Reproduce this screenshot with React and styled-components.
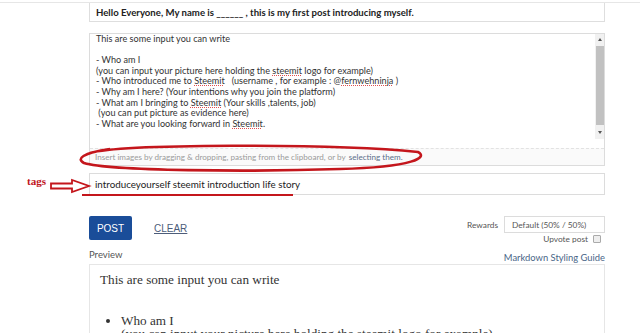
import { createGlobalStyle, styled } from "styled-components";

const Global = createGlobalStyle`
  html, body { margin: 0; padding: 0; background: #fff; }
  body { font-family: Lato, "Open Sans", sans-serif; color: #333; }
`;

const Page = styled.div`
  position: relative;
  width: 640px;
  height: 333px;
  overflow: hidden;
  border-top: 1px solid #e6e6e6;
  margin-top: 2px;
  box-sizing: border-box;
`;

const Column = styled.div`
  width: 516px;
  margin-left: 89px;
  display: flex;
  flex-direction: column;
`;

const TitleBox = styled.div`
  height: 19px;
  border: 1px solid #dedede;
  border-top: none;
  box-sizing: border-box;
  padding: 0 6px;
  display: flex;
  align-items: center;
  font-size: 9.6px;
  font-weight: 700;
  color: #222;
`;

const Editor = styled.div`
  margin-top: 11px;
  height: 133px;
  border: 1px solid #dcdcdc;
  box-sizing: border-box;
  display: flex;
  flex-direction: column;
`;

const EditArea = styled.div`
  flex: 1;
  display: flex;
`;

const EditText = styled.div`
  flex: 1;
  padding: 0 6px;
  font-size: 9.1px;
  line-height: 10.6px;
  color: #333;
  white-space: pre;
`;

const Spell = styled.span`
  text-decoration: underline dotted #e05050;
  text-decoration-thickness: 1px;
  text-underline-offset: 1px;
`;

const Scroll = styled.div`
  width: 9px;
  display: flex;
  flex-direction: column;
  align-items: center;
  background: #f1f1f1;
`;

const Arrow = styled.div`
  height: 10px;
  width: 9px;
  display: flex;
  align-items: center;
  justify-content: center;
  &::after {
    content: "";
    border-left: 2.5px solid transparent;
    border-right: 2.5px solid transparent;
    ${(p) => (p.$up ? "border-bottom: 3px solid #555;" : "border-top: 3px solid #555;")}
  }
`;

const Thumb = styled.div`
  width: 8px;
  height: 79px;
  margin: 2px 0;
  background: #c1c1c1;
`;

const Grip = styled.div`
  margin-top: auto;
  width: 9px;
  height: 9px;
  background: #fff;
`;

const Footer = styled.div`
  height: 16px;
  border-top: 1px dashed #e2e2e2;
  background: #fafafa;
  padding: 0 5px;
  display: flex;
  align-items: center;
  font-size: 8.1px;
  color: #9a9a9a;
  white-space: nowrap;
`;

const FooterLink = styled.span`
  color: #5b6f8a;
  margin-left: 3px;
`;

const TagsRow = styled.div`
  margin-top: 7px;
  height: 22px;
  border: 1px solid #dcdcdc;
  box-sizing: border-box;
  padding: 0 5px;
  display: flex;
  align-items: center;
  font-size: 9.8px;
  color: #222;
`;

const ActionRow = styled.div`
  margin-top: 21px;
  display: flex;
  justify-content: space-between;
  align-items: flex-start;
`;

const Buttons = styled.div`
  display: flex;
  align-items: center;
  gap: 22px;
`;

const PostButton = styled.button`
  width: 43px;
  height: 24px;
  border: none;
  border-radius: 2px;
  background: #1a4d99;
  color: #fff;
  font-family: "Liberation Sans", Arial, sans-serif;
  font-size: 10px;
  padding: 0;
`;

const ClearLink = styled.span`
  font-family: "Liberation Sans", Arial, sans-serif;
  font-size: 10px;
  color: #4d5d7a;
  text-decoration: underline;
`;

const RewardsCol = styled.div`
  display: flex;
  flex-direction: column;
  align-items: flex-end;
  font-size: 8.3px;
  color: #555;
`;

const RewardsLine = styled.div`
  display: flex;
  align-items: center;
  gap: 6px;
`;

const Select = styled.div`
  width: 101px;
  height: 17px;
  border: 1px solid #dcdcdc;
  box-sizing: border-box;
  padding: 0 7px;
  display: flex;
  align-items: center;
  color: #555;
`;

const Upvote = styled.div`
  margin-top: 1px;
  margin-right: 4px;
  display: flex;
  align-items: center;
  gap: 5px;
`;

const Check = styled.span`
  width: 6px;
  height: 6px;
  border: 1px solid #aaa;
  background: #eee;
  border-radius: 1px;
`;

const PreviewHead = styled.div`
  margin-top: 5px;
  display: flex;
  justify-content: space-between;
  align-items: flex-end;
  font-size: 9.5px;
  padding-bottom: 1px;
`;

const PreviewLabel = styled.span`
  color: #555;
  margin-bottom: 3px;
`;

const GuideLink = styled.span`
  color: #4a6688;
  font-size: 9.4px;
`;

const PreviewBox = styled.div`
  border: 1px solid #e6e6e6;
  height: 80px;
  padding: 6px 10px;
  font-family: "Liberation Serif", "DejaVu Serif", serif;
  color: #333;
  font-size: 13.2px;
`;

const PreviewPara = styled.p`
  margin: 0 0 25px;
  line-height: 18px;
`;

const PreviewList = styled.ul`
  margin: 0;
  padding-left: 21px;
  line-height: 13px;
`;

const Annot = styled.svg`
  position: absolute;
  left: 0;
  top: 0;
  pointer-events: none;
`;

const TagsNote = styled.span`
  position: absolute;
  left: 27px;
  top: 172px;
  font-family: "Liberation Serif", serif;
  font-weight: 700;
  font-size: 11px;
  color: #c0141c;
`;

const red = "#c4161c";

export default function App() {
  return (
    <Page>
      <Global />
      <Column>
        <TitleBox>Hello Everyone, My name is ______ , this is my first post introducing myself.</TitleBox>
        <Editor>
          <EditArea>
            <EditText>
              {"This are some input you can write\n\n- Who am I\n(you can input your picture here holding the "}
              <Spell>steemit</Spell>
              {" logo for example)\n- Who introduced me to "}
              <Spell>Steemit</Spell>
              {"   (username , for example : @"}
              <Spell>fernwehninja</Spell>
              {" )\n- Why am I here? (Your intentions why you join the platform)\n- What am I bringing to "}
              <Spell>Steemit</Spell>
              {" (Your skills ,talents, job)\n (you can put picture as evidence here)\n- What are you looking forward in "}
              <Spell>Steemit</Spell>
              {"."}
            </EditText>
            <Scroll>
              <Arrow $up />
              <Thumb />
              <Arrow />
              <Grip>
                <svg width="9" height="9" viewBox="0 0 9 9">
                  <path d="M8 2 L2 8 M8 5 L5 8" stroke="#999" strokeWidth="0.8" />
                </svg>
              </Grip>
            </Scroll>
          </EditArea>
          <Footer>
            Insert images by dragging &amp; dropping, pasting from the clipboard, or by
            <FooterLink>selecting them.</FooterLink>
          </Footer>
        </Editor>
        <TagsRow>introduceyourself steemit introduction life story</TagsRow>
        <ActionRow>
          <Buttons>
            <PostButton>POST</PostButton>
            <ClearLink>CLEAR</ClearLink>
          </Buttons>
          <RewardsCol>
            <RewardsLine>
              Rewards
              <Select>Default (50% / 50%)</Select>
            </RewardsLine>
            <Upvote>
              Upvote post
              <Check />
            </Upvote>
          </RewardsCol>
        </ActionRow>
        <PreviewHead>
          <PreviewLabel>Preview</PreviewLabel>
          <GuideLink>Markdown Styling Guide</GuideLink>
        </PreviewHead>
        <PreviewBox>
          <PreviewPara>This are some input you can write</PreviewPara>
          <PreviewList>
            <li>
              Who am I
              <br />
              (you can input your picture here holding the steemit logo for example)
            </li>
          </PreviewList>
        </PreviewBox>
      </Column>
      <TagsNote>tags</TagsNote>
      <Annot width="640" height="333" viewBox="0 0 640 333">
        <path
          d="M90 150 C 120 141, 330 140, 418 149 C 428 154, 415 164, 340 166 C 250 169, 110 168, 84 160 C 76 156, 82 150, 110 146"
          fill="none"
          stroke={red}
          strokeWidth="2.6"
        />
        <path
          d="M51 179.5 H72 V176 L89 182 L72 188 V184.5 H51 Z"
          fill="#fff"
          stroke={red}
          strokeWidth="1.8"
          transform="translate(0 1)"
        />
        <path d="M82 192 H293" stroke={red} strokeWidth="2" />
      </Annot>
    </Page>
  );
}
